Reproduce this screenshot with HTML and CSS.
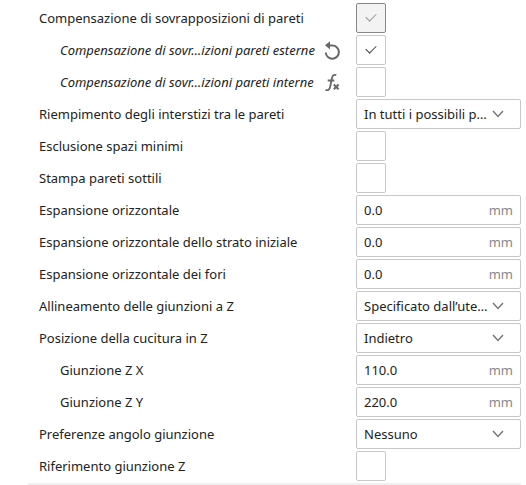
FILE: index.html
```html
<!DOCTYPE html>
<html lang="it">
<head>
  <meta charset="UTF-8">
  <meta name="viewport" content="width=device-width, initial-scale=1.0">
  <title>Impostazioni pareti</title>
  <link rel="stylesheet" href="styles.css">
</head>
<body>
  <form class="settings">
    <div class="row">
      <label for="overlap">Compensazione di sovrapposizioni di pareti</label>
      <input type="checkbox" id="overlap" class="hovered" checked>
    </div>
    <div class="row child changed">
      <label for="overlapOuter">Compensazione di sovr…izioni pareti esterne</label>
      <button type="button" class="icon" aria-label="Ripristina">
        <svg width="18" height="20" viewBox="0 0 18 20">
          <path d="M3 5.500H8A6.600 6.600 0 1 1 1.700 12.500" fill="none" stroke="#686868" stroke-width="2"/>
          <path d="M6 1.200V9.400L1 5.300z" fill="#686868"/>
        </svg>
      </button>
      <input type="checkbox" id="overlapOuter" checked>
    </div>
    <div class="row child changed">
      <label for="overlapInner">Compensazione di sovr…izioni pareti interne</label>
      <button type="button" class="icon" aria-label="Funzione">
        <svg width="18" height="20" viewBox="0 0 18 20">
          <path d="M12.300 3.200C9.800 2.200 8.600 3.200 8 6L6.200 14.500C5.600 17.500 4 18.800 1.500 17.800M3.700 8.500H10.300" fill="none" stroke="#686868" stroke-width="1.800"/>
          <path d="M9.800 12.500L14.600 17.300M14.600 12.500L9.800 17.300" fill="none" stroke="#686868" stroke-width="2"/>
        </svg>
      </button>
      <input type="checkbox" id="overlapInner">
    </div>
    <div class="row">
      <label for="fillGaps">Riempimento degli interstizi tra le pareti</label>
      <div class="field">
        <select id="fillGaps"><option>In tutti i possibili p…</option></select>
        <svg class="arrow" width="12" height="8" viewBox="0 0 12 8"><path d="M1 1L6 6.500L11 1"/></svg>
      </div>
    </div>
    <div class="row">
      <label for="filterGaps">Esclusione spazi minimi</label>
      <input type="checkbox" id="filterGaps">
    </div>
    <div class="row">
      <label for="thinWalls">Stampa pareti sottili</label>
      <input type="checkbox" id="thinWalls">
    </div>
    <div class="row">
      <label for="expansion">Espansione orizzontale</label>
      <div class="field">
        <input type="text" id="expansion" value="0.0">
        <span class="unit">mm</span>
      </div>
    </div>
    <div class="row">
      <label for="expansionFirst">Espansione orizzontale dello strato iniziale</label>
      <div class="field">
        <input type="text" id="expansionFirst" value="0.0">
        <span class="unit">mm</span>
      </div>
    </div>
    <div class="row">
      <label for="expansionHoles">Espansione orizzontale dei fori</label>
      <div class="field">
        <input type="text" id="expansionHoles" value="0.0">
        <span class="unit">mm</span>
      </div>
    </div>
    <div class="row">
      <label for="seamType">Allineamento delle giunzioni a Z</label>
      <div class="field">
        <select id="seamType"><option>Specificato dall’ute…</option></select>
        <svg class="arrow" width="12" height="8" viewBox="0 0 12 8"><path d="M1 1L6 6.500L11 1"/></svg>
      </div>
    </div>
    <div class="row">
      <label for="seamPosition">Posizione della cucitura in Z</label>
      <div class="field">
        <select id="seamPosition"><option>Indietro</option></select>
        <svg class="arrow" width="12" height="8" viewBox="0 0 12 8"><path d="M1 1L6 6.500L11 1"/></svg>
      </div>
    </div>
    <div class="row child">
      <label for="seamX">Giunzione Z X</label>
      <div class="field">
        <input type="text" id="seamX" value="110.0">
        <span class="unit">mm</span>
      </div>
    </div>
    <div class="row child">
      <label for="seamY">Giunzione Z Y</label>
      <div class="field">
        <input type="text" id="seamY" value="220.0">
        <span class="unit">mm</span>
      </div>
    </div>
    <div class="row">
      <label for="seamCorner">Preferenze angolo giunzione</label>
      <div class="field">
        <select id="seamCorner"><option>Nessuno</option></select>
        <svg class="arrow" width="12" height="8" viewBox="0 0 12 8"><path d="M1 1L6 6.500L11 1"/></svg>
      </div>
    </div>
    <div class="row">
      <label for="seamRelative">Riferimento giunzione Z</label>
      <input type="checkbox" id="seamRelative">
    </div>
  </form>
</body>
</html>
```

FILE: styles.css
```css
* {
  box-sizing: border-box;
}

body {
  margin: 0;
  background-color: #fff;
  color: #222;
  font-family: "Noto Sans", sans-serif;
  font-size: 13px;
}

.settings {
  margin: 0 5px 0 28px;
  padding-top: 3px;
  border-bottom: 2px solid #f0f0f0;
}

.row {
  display: grid;
  grid-template-columns: 1fr 32px 165px;
  align-items: center;
  height: 32px;
  padding-bottom: 2px;
  padding-left: 11px;
}

.row label {
  grid-column: 1;
  white-space: nowrap;
}

.child {
  padding-left: 32px;
}

.changed label {
  font-style: italic;
}

.icon {
  display: flex;
  grid-column: 2;
  padding: 0;
  border: none;
  background: none;
  cursor: pointer;
}

.row input[type="checkbox"] {
  display: grid;
  grid-column: 3;
  place-content: center;
  width: 30px;
  height: 30px;
  margin: 0;
  border: 1px solid #c8c8c8;
  border-radius: 2px;
  background-color: #fff;
  appearance: none;
}

/* tick mark */
input[type="checkbox"]:checked::before {
  content: "";
  width: 9px;
  height: 5px;
  margin-bottom: 4px;
  border-bottom: 1px solid #444;
  border-left: 1px solid #444;
  transform: rotate(-45deg);
}

.row input.hovered {
  border-color: #888;
  background-color: #f3f3f3;
}

input.hovered:checked::before {
  border-color: #999;
}

.field {
  display: flex;
  grid-column: 3;
  align-items: center;
  height: 30px;
  border: 1px solid #c8c8c8;
  border-radius: 2px;
  background-color: #fff;
}

.field input,
.field select {
  flex: 1;
  min-width: 0;
  height: 28px;
  padding: 0 0 0 7px;
  border: none;
  outline: none;
  background: none;
  color: inherit;
  font: inherit;
  appearance: none;
}

.unit {
  margin-right: 7px;
  color: #888;
}

.arrow {
  margin-right: 16px;
  fill: none;
  stroke: #777;
  stroke-width: 1.5;
}
```
